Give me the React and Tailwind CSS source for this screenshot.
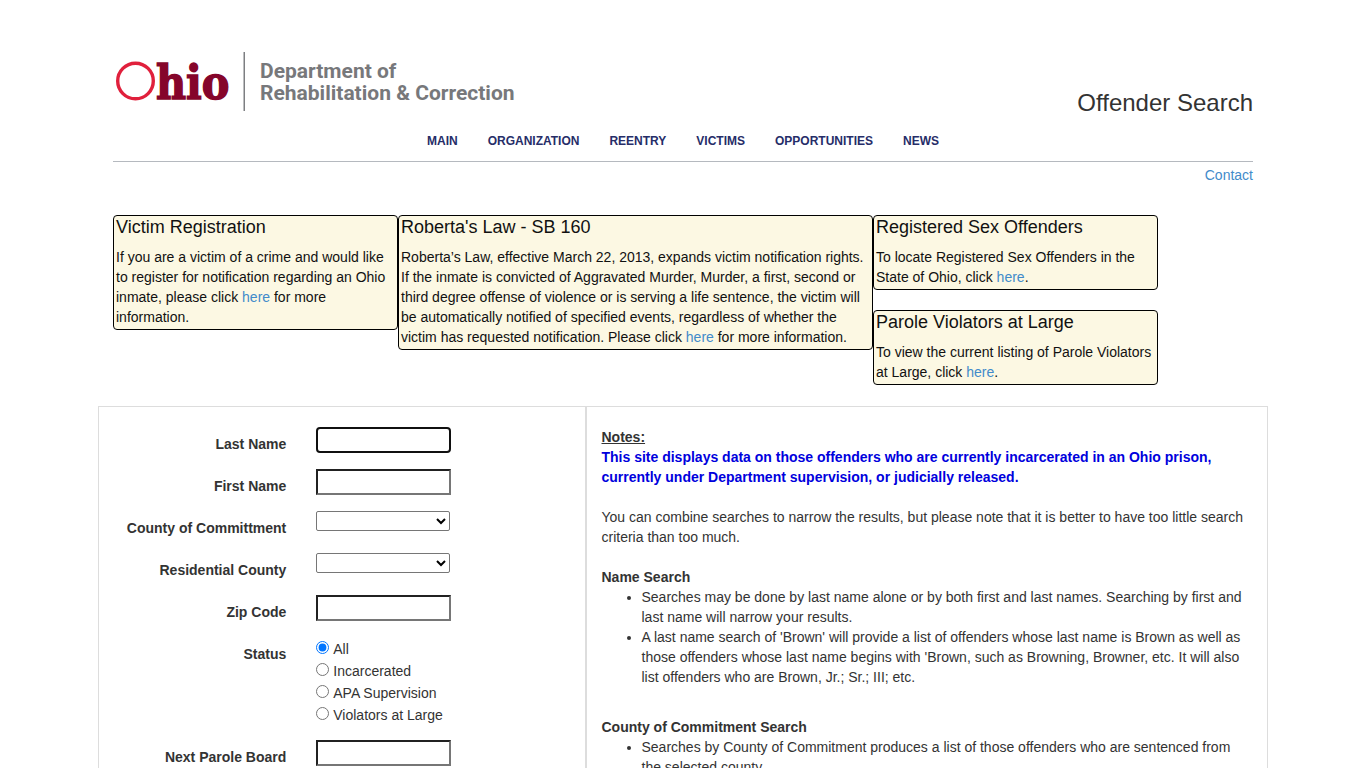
import React from 'react';

const NAV_ITEMS = ['Main', 'Organization', 'Reentry', 'Victims', 'Opportunities', 'News'];

const STATUSES = ['All', 'Incarcerated', 'APA Supervision', 'Violators at Large'];

const Link = ({ children }) => (
    <a href="#" className="text-[#428bca] hover:underline">{children}</a>
);

const Logo = () => (
    <svg width="410" height="65" viewBox="0 0 410 65" role="img" aria-label="Ohio Department of Rehabilitation &amp; Correction">
        <circle cx="22.5" cy="31" r="17.8" fill="none" stroke="#e0203c" strokeWidth="3.4" />
        <text x="43" y="49" fill="#85052b" stroke="#85052b" strokeWidth="1.4" fontFamily="'DejaVu Serif Condensed', 'DejaVu Serif', serif" fontWeight="700" fontSize="46">hio</text>
        <rect x="130.5" y="2" width="1.5" height="59" fill="#7d7f82" />
        <g fill="#77787b" fontFamily="Roboto, sans-serif" fontWeight="700" fontSize="21">
            <text x="147" y="28">Department of</text>
            <text x="147" y="50">Rehabilitation &amp; Correction</text>
        </g>
    </svg>
);

const InfoBox = ({ title, children }) => (
    <section className="rounded-[4px] border border-black bg-[#fcf8e3] px-[2px] pt-px pb-[2px] text-[#111]">
        <h4 className="mb-[10px] text-lg leading-5">{title}</h4>
        <p>{children}</p>
    </section>
);

const FormRow = ({ label, id, children }) => (
    <div className="mb-[15px] flex">
        <label htmlFor={id} className="w-5/12 pt-[7px] pr-[15px] text-right font-bold">{label}</label>
        <div className="pl-[15px]">{children}</div>
    </div>
);

const TextField = ({ label, id, autoFocus }) => (
    <FormRow label={label} id={id}>
        <input
            id={id}
            type="text"
            autoFocus={autoFocus}
            className="block h-[26px] w-[135px] border-2 border-[#767676] bg-white px-[2px] [border-style:inset] focus:rounded-[4px] focus:border-solid focus:border-[#101010] focus:outline-none"
        />
    </FormRow>
);

const SelectField = ({ label, id }) => (
    <FormRow label={label} id={id}>
        <select id={id} className="block h-5 w-[134px] rounded-[2px] border border-[#767676] bg-white text-black">
            <option></option>
        </select>
    </FormRow>
);

const SearchForm = () => (
    <form className="w-5/12 border border-[#ddd] pt-5">
        <TextField label="Last Name" id="lastName" autoFocus />
        <TextField label="First Name" id="firstName" />
        <SelectField label="County of Committment" id="countyOfCommitment" />
        <SelectField label="Residential County" id="residentialCounty" />
        <TextField label="Zip Code" id="zipCode" />
        <div role="radiogroup" aria-labelledby="statusLabel" className="mb-[15px] flex">
            <span id="statusLabel" className="w-5/12 pt-[7px] pr-[15px] text-right font-bold">Status</span>
            <div className="pl-[15px]">
                {STATUSES.map((status, index) => (
                    <label key={status} className="flex h-[22px] items-start gap-1">
                        <input type="radio" name="status" defaultChecked={index === 0} className="mt-1 h-[13px] w-[13px]" />
                        <span className="pt-[2px]">{status}</span>
                    </label>
                ))}
            </div>
        </div>
        <TextField label="Next Parole Board" id="nextParoleBoard" />
    </form>
);

const Notes = () => (
    <div className="w-7/12 border border-[#ddd] pt-5 pr-5 pl-[15px]">
        <p className="font-bold underline">Notes:</p>
        <p className="mb-5 font-bold text-[#0000dd]">
            This site displays data on those offenders who are currently incarcerated in an Ohio prison, currently under Department supervision, or judicially released.
        </p>
        <p className="mb-5">
            You can combine searches to narrow the results, but please note that it is better to have too little search criteria than too much.
        </p>
        <h5 className="font-bold">Name Search</h5>
        <ul className="mb-[30px] list-disc pl-10">
            <li>Searches may be done by last name alone or by both first and last names. Searching by first and last name will narrow your results.</li>
            <li>A last name search of 'Brown' will provide a list of offenders whose last name is Brown as well as those offenders whose last name begins with 'Brown, such as Browning, Browner, etc. It will also list offenders who are Brown, Jr.; Sr.; III; etc.</li>
        </ul>
        <h5 className="font-bold">County of Commitment Search</h5>
        <ul className="list-disc pl-10">
            <li>Searches by County of Commitment produces a list of those offenders who are sentenced from the selected county.</li>
        </ul>
    </div>
);

export default function App() {
    return (
        <div className="mx-auto max-w-[1170px] bg-white pt-[50px] font-['Liberation_Sans',Arial,sans-serif] text-sm leading-5 text-[#333]">
            <header className="px-[15px]">
                <div className="flex items-end justify-between">
                    <a href="#"><Logo /></a>
                    <h1 className="text-2xl leading-6">Offender Search</h1>
                </div>
                <nav className="flex justify-center gap-[30px] border-b border-[#b5b9bf] pt-4 pb-[10px] text-xs leading-5 font-bold text-[#262d68] uppercase">
                    {NAV_ITEMS.map((item) => (
                        <a key={item} href="#">{item}</a>
                    ))}
                </nav>
                <div className="pt-[3px] text-right">
                    <Link>Contact</Link>
                </div>
            </header>

            <div className="grid grid-cols-12 items-start px-[15px] pt-[30px]">
                <div className="col-span-3">
                    <InfoBox title="Victim Registration">
                        If you are a victim of a crime and would like to register for notification regarding an Ohio inmate, please click <Link>here</Link> for more information.
                    </InfoBox>
                </div>
                <div className="col-span-5">
                    <InfoBox title="Roberta's Law - SB 160">
                        Roberta’s Law, effective March 22, 2013, expands victim notification rights. If the inmate is convicted of Aggravated Murder, Murder, a first, second or third degree offense of violence or is serving a life sentence, the victim will be automatically notified of specified events, regardless of whether the victim has requested notification. Please click <Link>here</Link> for more information.
                    </InfoBox>
                </div>
                <div className="col-span-3 flex flex-col gap-5">
                    <InfoBox title="Registered Sex Offenders">
                        To locate Registered Sex Offenders in the State of Ohio, click <Link>here</Link>.
                    </InfoBox>
                    <InfoBox title="Parole Violators at Large">
                        To view the current listing of Parole Violators at Large, click <Link>here</Link>.
                    </InfoBox>
                </div>
            </div>

            <main className="mt-[21px] flex">
                <SearchForm />
                <Notes />
            </main>
        </div>
    );
}
